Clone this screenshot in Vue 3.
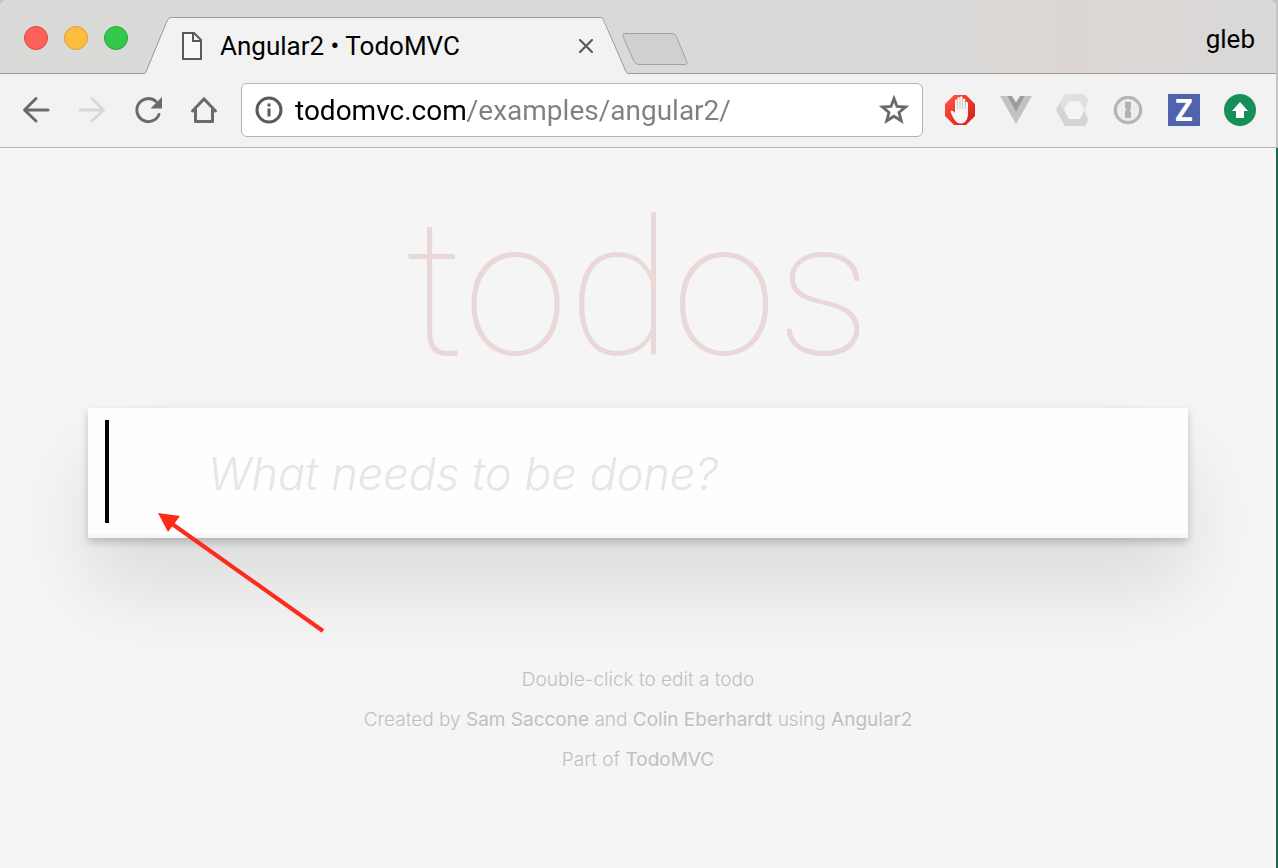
<script setup>
import { ref } from 'vue'

const url = ref('todomvc.com/examples/angular2/')
const newTodo = ref('')
</script>

<template>
  <div class="desktop">
    <div class="browser">
      <header class="tab-strip">
        <div class="window-buttons">
          <button class="dot dot-close" aria-label="Close"></button>
          <button class="dot dot-minimize" aria-label="Minimize"></button>
          <button class="dot dot-zoom" aria-label="Zoom"></button>
        </div>

        <div class="tab">
          <svg class="tab-edge" width="27" height="57" viewBox="0 0 27 57">
            <path d="M0 57 Q2 56 3 54 L23 4 Q25 0.5 27 0.5 V57 Z" fill="#f2f2f2" />
            <path d="M0 56.5 Q1.500 56 2.500 53.500 L23 4 Q24.500 0.500 27 0.500" fill="none" stroke="#9a9a9a" />
          </svg>
          <div class="tab-body">
            <svg class="tab-page" width="22" height="30" viewBox="0 0 22 30">
              <path d="M2 2 H13 L20 9 V28 H2 Z" fill="#fff" fill-opacity="0.5" stroke="#5a5a5a" stroke-width="2" />
              <path d="M12 2 V10 H20" fill="none" stroke="#5a5a5a" stroke-width="2" />
            </svg>
            <span class="tab-title">Angular2 • TodoMVC</span>
            <button class="tab-close" aria-label="Close tab">
              <svg width="14" height="14" viewBox="0 0 14 14">
                <path d="M1 1 L13 13 M13 1 L1 13" stroke="#5a5a5a" stroke-width="2.2" stroke-linecap="round" />
              </svg>
            </button>
          </div>
          <svg class="tab-edge" width="27" height="57" viewBox="0 0 27 57">
            <path d="M27 57 Q25 56 24 54 L4 4 Q2 0.5 0 0.5 V57 Z" fill="#f2f2f2" />
            <path d="M27 56.5 Q25.500 56 24.500 53.500 L3 4 Q2 0.500 0 0.500" fill="none" stroke="#9a9a9a" />
          </svg>
        </div>

        <button class="new-tab" aria-label="New tab">
          <svg width="66" height="32" viewBox="0 0 66 32">
            <path d="M3 0.500 H50 Q53 0.500 54.500 3.500 L64.500 28 Q66 31.500 63 31.500 H17 Q13.500 31.500 12 28.500 L1 3.500 Q0 0.500 3 0.500 Z" fill="#d0d0d0" stroke="#a0a0a0" />
          </svg>
        </button>

        <span class="profile">gleb</span>
      </header>

      <nav class="toolbar">
        <button class="nav-button" aria-label="Back">
          <svg width="32" height="32" viewBox="0 0 32 32" fill="none" stroke="#6a6a6a" stroke-width="3" stroke-linecap="round">
            <path d="M28 16 H5 M16 4.500 L4.500 16 L16 27" stroke-linejoin="round" />
          </svg>
        </button>
        <button class="nav-button" aria-label="Forward" disabled>
          <svg width="32" height="32" viewBox="0 0 32 32" fill="none" stroke="#d8d8d8" stroke-width="3" stroke-linecap="round">
            <path d="M4 16 H27 M16 4.500 L27.500 16 L16 27" stroke-linejoin="round" />
          </svg>
        </button>
        <button class="nav-button" aria-label="Reload">
          <svg width="32" height="32" viewBox="0 0 32 32">
            <path d="M27 20.500 A11.500 11.500 0 1 1 24 7.500" fill="none" stroke="#6a6a6a" stroke-width="3" stroke-linecap="round" />
            <path d="M30 3 V14.500 H18.500 Z" fill="#6a6a6a" />
          </svg>
        </button>
        <button class="nav-button" aria-label="Home">
          <svg width="32" height="32" viewBox="0 0 32 32" fill="none" stroke="#6a6a6a" stroke-width="3">
            <path d="M4.500 17 L16 5 L27.500 17" stroke-linecap="round" />
            <path d="M7.500 15 V27.500 H24.500 V15" stroke-linejoin="round" />
          </svg>
        </button>

        <div class="omnibox">
          <svg width="28" height="28" viewBox="0 0 28 28">
            <circle cx="14" cy="14" r="12" fill="none" stroke="#5a5a5a" stroke-width="3" />
            <path d="M12.500 7.500 h3 v3 h-3 Z M12.500 12.500 h3 v8 h-3 Z" fill="#5a5a5a" />
          </svg>
          <input v-model="url" class="url" type="text" aria-label="Address" spellcheck="false" />
          <button class="star" aria-label="Bookmark this page">
            <svg width="30" height="30" viewBox="0 0 30 30">
              <path d="M15 3.500 L18 11.500 L26.500 12 L20 17.400 L22.300 25.800 L15 21.200 L7.700 25.800 L10 17.400 L3.500 12 L12 11.500 Z" fill="none" stroke="#6a6a6a" stroke-width="2.800" />
            </svg>
          </button>
        </div>

        <div class="extensions">
          <button class="extension" aria-label="Ad blocker">
            <svg width="32" height="32" viewBox="0 0 32 32">
              <defs>
                <linearGradient id="red" x1="0" y1="0" x2="1" y2="1">
                  <stop offset="0" stop-color="#ff5a4a" />
                  <stop offset="0.500" stop-color="#f0352b" />
                  <stop offset="1" stop-color="#c81f18" />
                </linearGradient>
              </defs>
              <path d="M10 1 H22 L31 10 V22 L22 31 H10 L1 22 V10 Z" fill="url(#red)" />
              <path d="M13 28.500 Q10 26 7.500 20 Q6 17 7.500 16.500 Q9 16.200 11 19 V7 Q11 5.300 12.200 5.300 Q13.400 5.300 13.400 7 V4.500 Q13.500 3 14.800 3 Q16 3 16 4.500 V3.500 Q16.200 2.300 17.300 2.300 Q18.500 2.300 18.600 4 V6 Q18.700 4.500 20 4.500 Q21.300 4.500 21.300 6 V9 Q21.500 7.500 22.700 7.700 Q24 8 24 9.500 V20 Q24 25 20.500 28.500 Q16.500 30.500 13 28.500 Z" fill="#f6f6f6" />
              <path d="M13.400 7 V15 M16 4.500 V15 M18.600 5 V15 M21.300 8 V15" stroke="#c9b5b3" stroke-width="0.800" />
            </svg>
          </button>
          <button class="extension" aria-label="Vue devtools">
            <svg width="32" height="32" viewBox="0 0 32 32">
              <path d="M0 2 H7 L16 18 L25 2 H32 L16 30 Z" fill="#c3c3c3" />
              <path d="M7 2 H12 L16 8.500 L20 2 H25 L16 18 Z" fill="#9d9d9d" />
            </svg>
          </button>
          <button class="extension" aria-label="Polymer devtools">
            <svg width="32" height="32" viewBox="0 0 32 32">
              <path d="M9 0 H28 L32 6 L29 16 L32 26 L29 32 H9 L0 16 Z" fill="#e0e0e0" />
              <path d="M0 16 L4 9 L13 25 H24 L28 17 L32 26 L29 32 H9 Z" fill="#d4d4d4" />
              <path d="M13 7.500 H24 L28.500 16 L24 25 H13 L8 16 Z" fill="#f4f4f4" />
            </svg>
          </button>
          <button class="extension" aria-label="1Password">
            <svg width="32" height="32" viewBox="0 0 32 32">
              <circle cx="16" cy="16" r="12.700" fill="#ededed" stroke="#b5b5b5" stroke-width="3.200" />
              <path d="M13 8 H19 V15 L17.500 16.500 L19 18 V24 H13 V17 L14.500 15.500 L13 14 Z" fill="#b2b2b2" />
            </svg>
          </button>
          <button class="extension extension-z" aria-label="Z extension">Z</button>
          <button class="extension" aria-label="Update">
            <svg width="32" height="32" viewBox="0 0 32 32">
              <circle cx="16" cy="16" r="16" fill="#159058" />
              <path d="M16 8 L24 17 H20 V24 H12 V17 H8 Z" fill="#fff" />
            </svg>
          </button>
        </div>
      </nav>

      <main class="page">
        <section class="todoapp">
          <h1>todos</h1>
          <div class="entry">
            <input v-model="newTodo" class="new-todo" type="text" placeholder="What needs to be done?" aria-label="New todo" />
            <span class="caret"></span>
            <svg class="pointer" width="170" height="122" viewBox="0 0 170 122">
              <path d="M10 8 L165 118" stroke="#fc2b1c" stroke-width="4" />
              <path d="M0 0 L22 3 L10 19 Z" fill="#fc2b1c" />
            </svg>
          </div>
        </section>

        <footer class="info">
          <p>Double-click to edit a todo</p>
          <p>Created by <a href="#">Sam Saccone</a> and <a href="#">Colin Eberhardt</a> using <a href="#">Angular2</a></p>
          <p>Part of <a href="#">TodoMVC</a></p>
        </footer>
      </main>
    </div>
  </div>
</template>

<style>
body {
  margin: 0;
}
</style>

<style scoped>
.desktop {
  box-sizing: border-box;
  min-height: 100vh;
  padding-right: 2px;
  display: flex;
  background: linear-gradient(#c4c4c4 148px, #1b6650 148px);
  font-family: Roboto, "Liberation Sans", sans-serif;
}

.browser {
  flex: 1;
  min-width: 0;
  display: flex;
  flex-direction: column;
  border-radius: 8px 8px 0 0;
  overflow: hidden;
  background: #f5f5f5;
}

button {
  padding: 0;
  border: none;
  background: none;
  font-family: inherit;
}

svg {
  display: block;
}

.tab-strip {
  display: flex;
  align-items: flex-end;
  height: 74px;
  background: linear-gradient(90deg, #dadad8, #d9d9d7 70%, #dcd7d5 84%, #dad9d8);
  box-shadow: inset 0 -1px #9a9a9a;
}

.window-buttons {
  display: flex;
  gap: 16px;
  align-self: flex-start;
  padding: 26px 16px 0 24px;
}

.dot {
  box-sizing: border-box;
  width: 24px;
  height: 24px;
  border-radius: 50%;
}

.dot-close {
  background: #fc605b;
  border: 1px solid #e2443f;
}

.dot-minimize {
  background: #fdbc40;
  border: 1px solid #de9f34;
}

.dot-zoom {
  background: #34c84a;
  border: 1px solid #24a732;
}

.tab {
  display: flex;
  flex: 0 1 484px;
  min-width: 0;
}

.tab-edge {
  flex: none;
}

.tab-body {
  flex: 1;
  min-width: 0;
  display: flex;
  align-items: center;
  box-sizing: border-box;
  height: 57px;
  padding: 0 8px 0 10px;
  border-top: 1px solid #9a9a9a;
  background: #f2f2f2;
}

.tab-title {
  flex: 1;
  margin-left: 17px;
  font-size: 26px;
  white-space: nowrap;
  overflow: hidden;
}

.new-tab {
  margin: 0 0 9px -6px;
}

.profile {
  align-self: center;
  margin-left: auto;
  padding: 4px 21px 0 0;
  font-size: 26px;
}

.toolbar {
  display: flex;
  align-items: center;
  box-sizing: border-box;
  height: 74px;
  padding: 0 20px 1px;
  border-bottom: 1px solid #b4b4b4;
  background: #f2f2f2;
}

.nav-button {
  margin-right: 24px;
}

.omnibox {
  flex: 1;
  min-width: 0;
  display: flex;
  align-items: center;
  box-sizing: border-box;
  height: 54px;
  padding: 0 13px;
  margin-left: -3px;
  border: 1px solid #b4b4b4;
  border-radius: 6px;
  background: #fff;
}

.url {
  flex: 1;
  min-width: 0;
  padding: 0;
  margin: 0 12px;
  border: none;
  outline: none;
  font-family: inherit;
  font-size: 28px;
  color: transparent;
  background: linear-gradient(90deg, #000 173px, #808080 173px);
  background-clip: text;
  -webkit-background-clip: text;
}

.extensions {
  display: flex;
  gap: 24px;
  margin-left: 21px;
}

.extension {
  width: 32px;
  height: 32px;
}

.extension-z {
  background: #5063ab;
  color: #fff;
  font-family: "Open Sans", sans-serif;
  font-size: 30px;
  font-weight: 700;
  line-height: 32px;
}

.page {
  padding: 0 88px;
  font-family: "Helvetica Neue", Inter, "Liberation Sans", sans-serif;
}

.todoapp h1 {
  margin: 0;
  padding-top: 22px;
  font-family: Roboto, sans-serif;
  font-size: 190px;
  font-weight: 100;
  line-height: 238px;
  text-align: center;
  color: rgba(175, 47, 47, 0.15);
}

.entry {
  position: relative;
  box-shadow: 0 4px 8px rgba(0, 0, 0, 0.2), 0 50px 80px rgba(0, 0, 0, 0.1);
}

.new-todo {
  display: block;
  box-sizing: border-box;
  width: 100%;
  height: 130px;
  padding: 0 32px 0 120px;
  border: none;
  outline: none;
  background: #fefefe;
  box-shadow: inset 0 -4px 2px rgba(0, 0, 0, 0.03);
  font-family: inherit;
  font-size: 45px;
  font-weight: 300;
}

.new-todo::placeholder {
  font-style: italic;
  color: #e6e6e6;
  opacity: 1;
}

.caret {
  position: absolute;
  top: 12px;
  left: 17px;
  width: 4px;
  height: 103px;
  background: #000;
}

.pointer {
  position: absolute;
  top: 105px;
  left: 70px;
}

.info {
  margin-top: 131px;
  text-align: center;
  font-size: 19px;
  font-weight: 300;
  line-height: 22px;
  color: #bfbfbf;
  text-shadow: 0 1px 0 rgba(255, 255, 255, 0.5);
}

.info p {
  margin: 0 0 18px;
}

.info a {
  color: inherit;
  font-weight: 400;
  text-decoration: none;
}
</style>
